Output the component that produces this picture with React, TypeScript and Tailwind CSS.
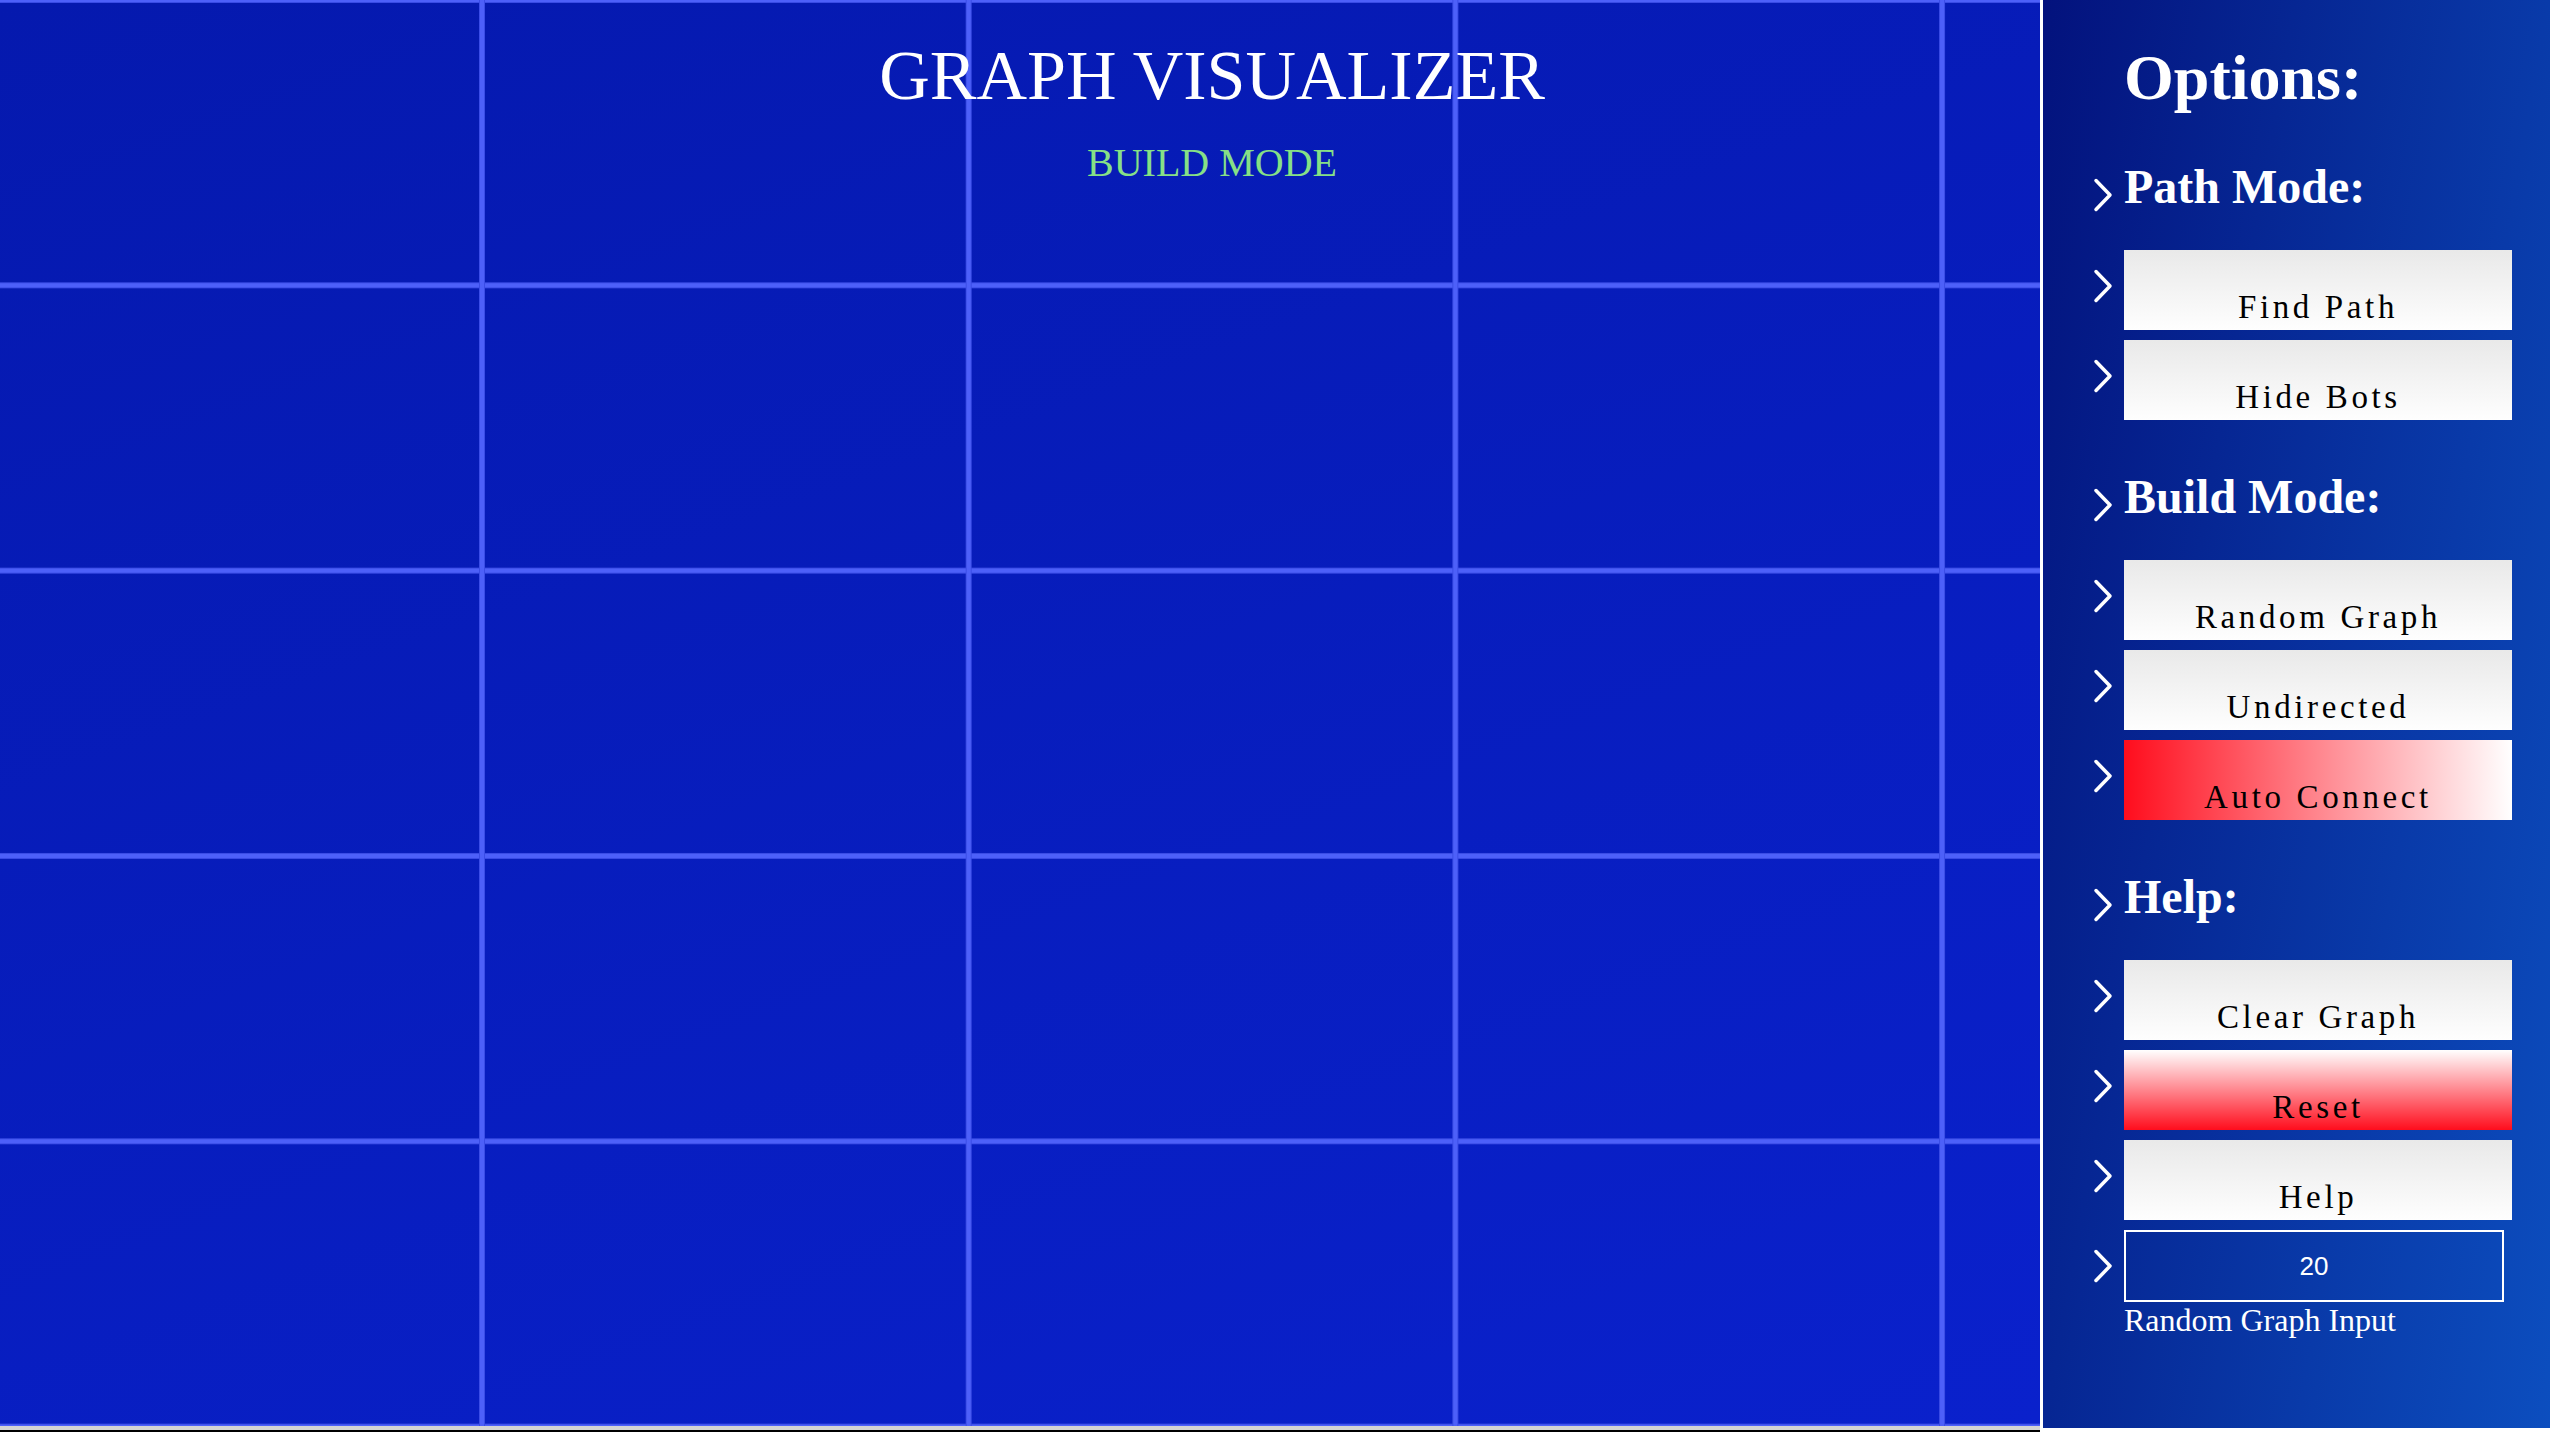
import React from 'react';

const serif = "font-['Liberation_Serif','Times_New_Roman',serif]";

function Chevron({ className = '' }: { className?: string }) {
    return (
        <svg className={`shrink-0 ${className}`} width="20" height="34" viewBox="0 0 20 34" fill="none">
            <path d="M3 2.5 L17 17 L3 31.5" stroke="white" strokeWidth={3.5} strokeLinecap="round" strokeLinejoin="round" />
        </svg>
    );
}

function SectionTitle({ label, first = false }: { label: string; first?: boolean }) {
    return (
        <div className={`flex items-end ${first ? 'mt-[46px]' : 'mt-[50px]'}`}>
            <Chevron className="mb-[2px]" />
            <h2 className="ml-[11px] text-[48px] leading-[54px] font-bold text-white">{label}</h2>
        </div>
    );
}

type Variant = 'plain' | 'redSide' | 'redBottom';

function OptionButton({ label, variant = 'plain', gap = true }: { label: string; variant?: Variant; gap?: boolean }) {
    // background differs per state: plain grey-white, toggled red gradients
    const bg =
        variant === 'redSide'
            ? 'bg-[linear-gradient(to_right,#ff0d1d,#ffffff)]'
            : variant === 'redBottom'
            ? 'bg-[linear-gradient(to_bottom,#ffffff,#ff0d1d)]'
            : 'bg-[linear-gradient(to_bottom,#e9e9e9,#fefefe)]';

    return (
        <div className={`flex items-center ${gap ? 'mt-[10px]' : 'mt-[36px]'}`}>
            <Chevron className="mb-[9px]" />
            <button
                className={`ml-[11px] flex h-[80px] w-[388px] items-start justify-center pt-[37px] ${bg} ${serif} text-[33px] leading-[40px] tracking-[0.11em] text-black`}
            >
                {label}
            </button>
        </div>
    );
}

export default function App() {
    return (
        <div className={`flex h-[1432px] w-[2550px] overflow-hidden bg-white ${serif}`}>
            {/* Canvas column */}
            <div className="flex w-[2040px] flex-col">
                <div className="h-[1426px] overflow-hidden [background-image:linear-gradient(90deg,#3a4ce6_0_1px,#4d60f9_1px_5px,#3a4ce6_5px_6px,transparent_6px),linear-gradient(180deg,#3a4ce6_0_1px,#4d60f9_1px_5px,#3a4ce6_5px_6px,transparent_6px),linear-gradient(160deg,#0519ae,#0a21cc)] [background-size:486.7px_100%,100%_285.33px,100%_100%] [background-position:479px_0,0_-3px,0_0] [background-repeat:repeat,repeat,no-repeat]">
                    <div className="w-[2424px] pt-[36px] text-center">
                        <h1 className="text-[70px] leading-[80px] font-normal text-white">GRAPH VISUALIZER</h1>
                        <p className="mt-[24px] text-[40px] leading-[46px] text-[#86e086]">BUILD MODE</p>
                    </div>
                </div>
                <div className="h-[4px] bg-[#d4d4d4]" />
                <div className="h-[2px] bg-black" />
            </div>

            {/* Options sidebar */}
            <aside className="ml-[3px] flex h-[1428px] w-[507px] flex-col bg-[linear-gradient(100deg,#03127d,#0c4ebf)] pt-[42px] pl-[50px]">
                <h1 className="ml-[31px] text-[64px] leading-[72px] font-bold text-white">Options:</h1>

                <SectionTitle label="Path Mode:" first />
                <OptionButton label="Find Path" gap={false} />
                <OptionButton label="Hide Bots" />

                <SectionTitle label="Build Mode:" />
                <OptionButton label="Random Graph" gap={false} />
                <OptionButton label="Undirected" />
                <OptionButton label="Auto Connect" variant="redSide" />

                <SectionTitle label="Help:" />
                <OptionButton label="Clear Graph" gap={false} />
                <OptionButton label="Reset" variant="redBottom" />
                <OptionButton label="Help" />

                <div className="mt-[10px] flex items-center">
                    <Chevron />
                    <input
                        defaultValue="20"
                        className="ml-[11px] h-[72px] w-[380px] border-2 border-white bg-transparent text-center font-['Liberation_Sans',Arial,sans-serif] text-[26px] text-white outline-none"
                    />
                </div>
                <label className="ml-[31px] text-[32px] leading-[36px] text-white">Random Graph Input</label>
            </aside>
        </div>
    );
}
